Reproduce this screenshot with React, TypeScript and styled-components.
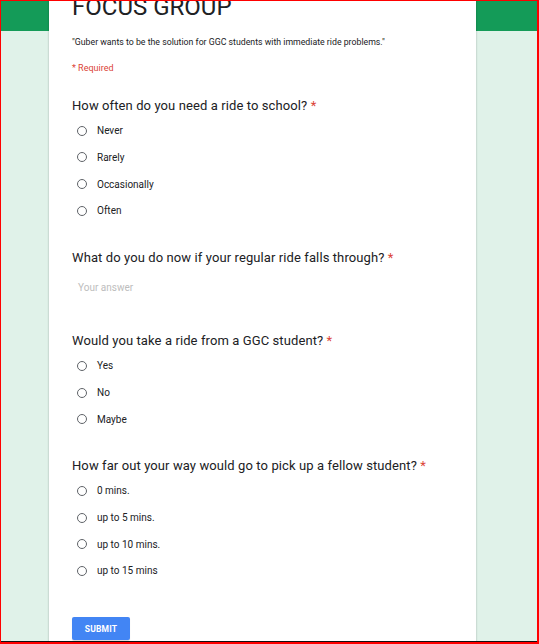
import React from "react";
import styled, { createGlobalStyle } from "styled-components";

const Global = createGlobalStyle`
  html, body { margin: 0; padding: 0; }
  body { font-family: Roboto, "Noto Sans", Arial, sans-serif; background: #fff; }
  * { box-sizing: border-box; }
`;

const Frame = styled.div`
  position: relative;
  width: 539px;
  height: 644px;
  overflow: hidden;
  border-top: 1px solid #ff0000;
  border-left: 1px solid #ff0000;
  border-right: 2px solid #ff0000;
  border-bottom: 2px solid #ff0000;
  background: linear-gradient(#149b58 0 30px, #e0f2e9 30px);
  &::after {
    content: "";
    position: absolute;
    left: 0;
    right: 0;
    bottom: 0;
    height: 1px;
    background: #111;
  }
`;

const Card = styled.div`
  margin: -8px 0 0 48px;
  width: 427px;
  background: #fff;
  box-shadow: 0 0 2px rgba(0, 0, 0, 0.28);
  padding: 0 23px 40px 23px;
  min-height: 700px;
`;

const Title = styled.h1`
  margin: 0;
  font-size: 24px;
  line-height: 28px;
  font-weight: 400;
  color: #202124;
`;

const Description = styled.p`
  margin: 15px 0 0 0;
  font-size: 8.75px;
  line-height: 12px;
  color: #202124;
`;

const RequiredNote = styled.p`
  margin: 14px 0 0 0;
  font-size: 9px;
  line-height: 12px;
  color: #db4437;
`;

const Question = styled.section<{ $first?: boolean }>`
  margin-top: ${(p) => (p.$first ? "23px" : "24.5px")};
`;

const QuestionTitle = styled.h2`
  margin: 0;
  font-size: 13px;
  line-height: 18px;
  font-weight: 400;
  color: #202124;
  letter-spacing: 0.1px;
`;

const Star = styled.span`
  color: #db4437;
`;

const Options = styled.div`
  margin-top: 2.5px;
  display: flex;
  flex-direction: column;
`;

const OptionRow = styled.label`
  display: flex;
  align-items: center;
  height: 26.67px;
  padding-left: 5px;
  gap: 10px;
  font-size: 10px;
  color: #202124;
`;

const RadioCircle = styled.span`
  width: 10px;
  height: 10px;
  border-radius: 50%;
  border: 1px solid #5f6368;
  flex: none;
`;

const Answer = styled.div`
  margin: 15px 0 0 6px;
  padding-bottom: 14px;
  font-size: 10px;
  line-height: 12px;
  color: #bdbdbd;
`;

const SubmitButton = styled.button`
  margin-top: 33px;
  width: 58px;
  height: 23px;
  border: none;
  border-radius: 2px;
  background: #4285f4;
  color: #fff;
  font-family: Roboto, Arial, sans-serif;
  font-size: 8.5px;
  font-weight: 700;
  letter-spacing: 0.2px;
  padding: 0;
  box-shadow: 0 1px 1px rgba(0, 0, 0, 0.15);
`;

type Q = { title: string; options?: string[] };

const questions: Q[] = [
  { title: "How often do you need a ride to school?", options: ["Never", "Rarely", "Occasionally", "Often"] },
  { title: "What do you do now if your regular ride falls through?" },
  { title: "Would you take a ride from a GGC student?", options: ["Yes", "No", "Maybe"] },
  {
    title: "How far out your way would go to pick up a fellow student?",
    options: ["0 mins.", "up to 5 mins.", "up to 10 mins.", "up to 15 mins"],
  },
];

export default function App() {
  return (
    <>
      <Global />
      <Frame>
        <Card>
          <Title>FOCUS GROUP</Title>
          <Description>"Guber wants to be the solution for GGC students with immediate ride problems."</Description>
          <RequiredNote>* Required</RequiredNote>
          {questions.map((q, i) => (
            <Question key={q.title} $first={i === 0}>
              <QuestionTitle>
                {q.title} <Star>*</Star>
              </QuestionTitle>
              {q.options ? (
                <Options>
                  {q.options.map((o) => (
                    <OptionRow key={o}>
                      <RadioCircle />
                      {o}
                    </OptionRow>
                  ))}
                </Options>
              ) : (
                <Answer>Your answer</Answer>
              )}
            </Question>
          ))}
          <SubmitButton>SUBMIT</SubmitButton>
        </Card>
      </Frame>
    </>
  );
}
